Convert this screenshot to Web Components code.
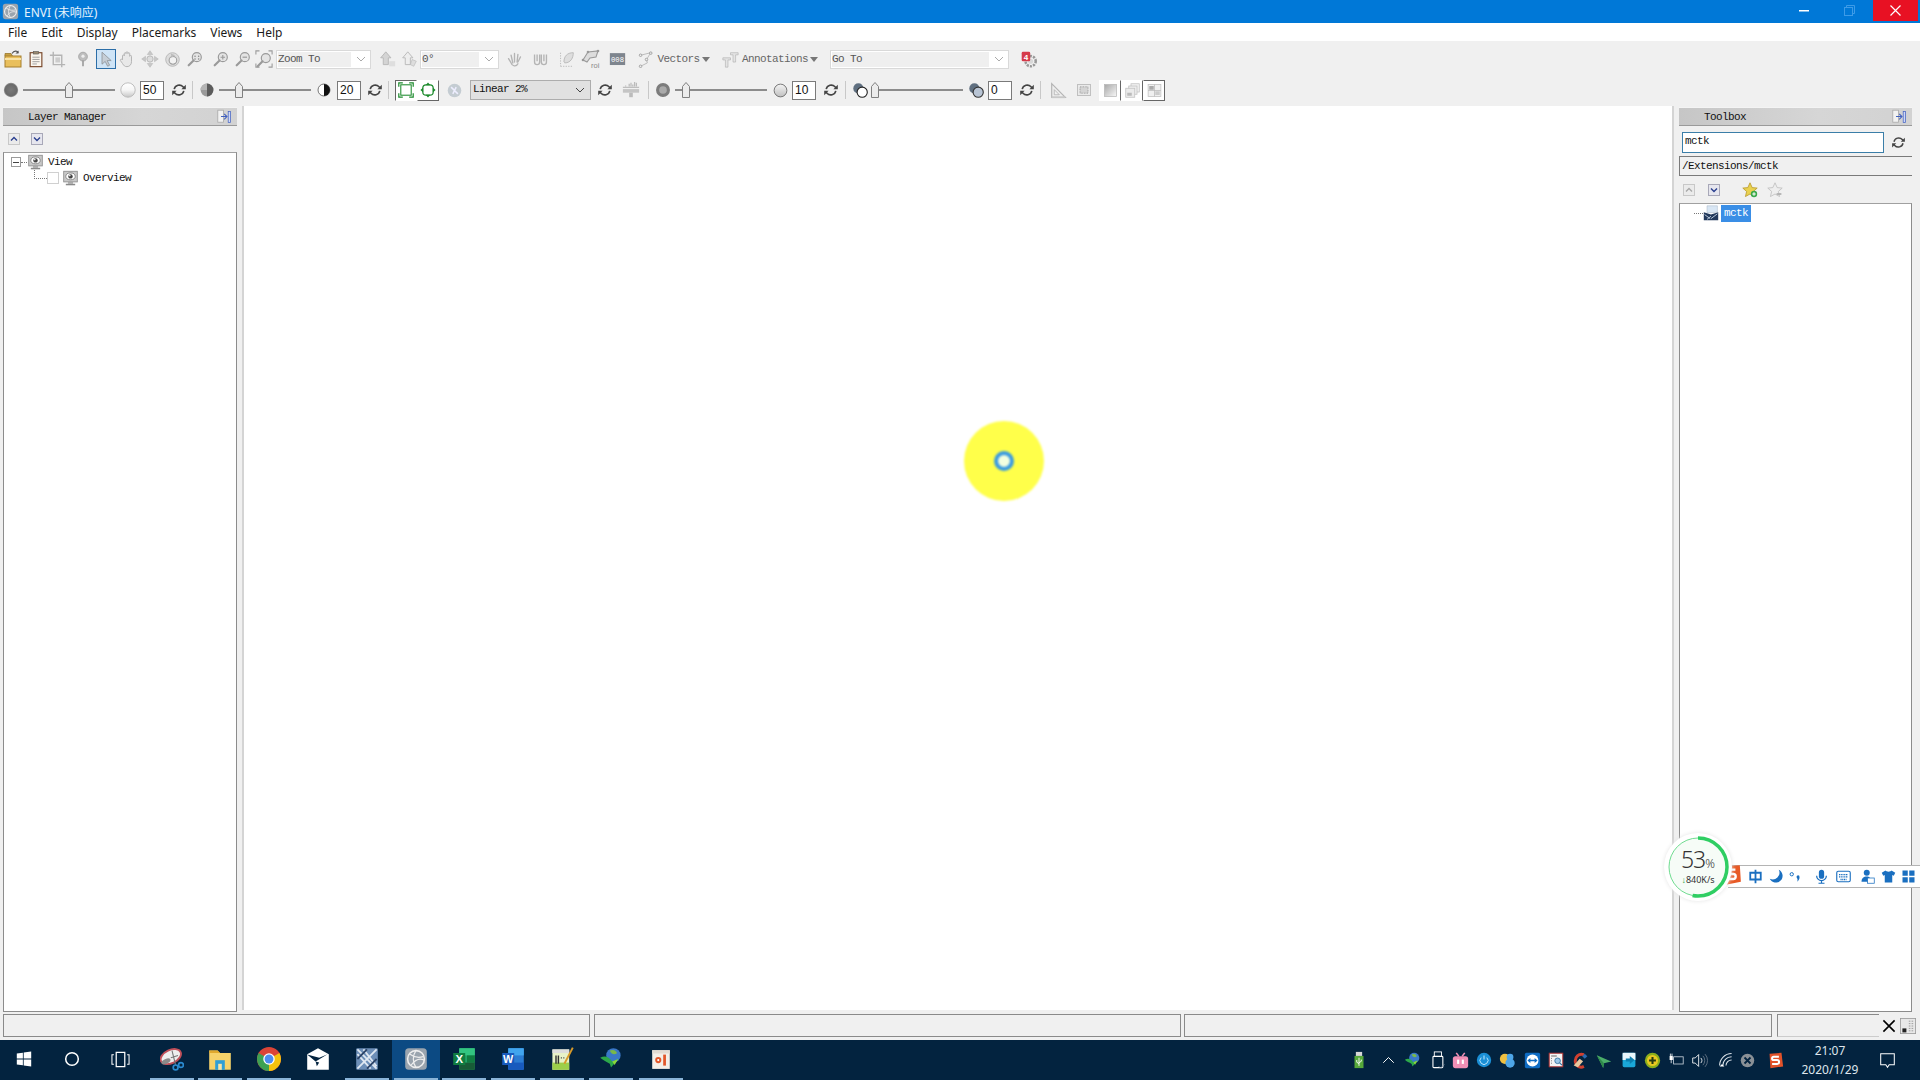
<!DOCTYPE html>
<html lang="zh"><head><meta charset="utf-8"><title>ENVI</title>
<style>
html,body{margin:0;padding:0;width:1920px;height:1080px;overflow:hidden;background:#f0f0f0}
</style></head>
<body>
<env-app></env-app>
<script>
const MONO="font-family:'Liberation Mono',monospace;font-size:11px;letter-spacing:-.6px;";
const G='#b4b4b4', GD='#9a9a9a';
const mag=(extra='')=>`<circle cx="12" cy="8" r="5" fill="#e4e4e4" stroke="${GD}" stroke-width="1.3"/><path d="M8.4 11.6 3 17" stroke="${GD}" stroke-width="2.4" stroke-linecap="round"/>${extra}`;
const refresh=(c='#444')=>`<path d="M4 9a6.4 6.4 0 0 1 11-3l1.500 1.600" fill="none" stroke="${c}" stroke-width="2"/><path d="M18.500 3.500v5.500h-5.500z" fill="${c}"/><path d="M16 11a6.400 6.400 0 0 1-11 3l-1.500-1.600" fill="none" stroke="${c}" stroke-width="2"/><path d="M1.500 16.500v-5.500h5.500z" fill="${c}"/>`;
const monitor=`<rect x="2" y="1.500" width="16" height="12.500" fill="#c8c8c8" stroke="#8c8c8c"/><ellipse cx="10" cy="7.500" rx="5.500" ry="4" fill="#fff" stroke="#666" stroke-width=".8"/><circle cx="10" cy="7.500" r="2.600" fill="#444"/><circle cx="9.200" cy="6.600" r=".9" fill="#fff"/><rect x="7" y="14" width="6" height="2.200" fill="#aaa"/><rect x="4.500" y="16.200" width="11" height="1.800" fill="#8a8a8a"/>`;
const dock=`<rect x="1" y="1.500" width="7" height="15" fill="#f2f2f2" stroke="#a8a8a8"/><path d="M5 9.500h7M9 6l3.500 3.500L9 13" fill="none" stroke="#4060c0" stroke-width="1.300"/><rect x="14" y="3" width="3" height="14" fill="#cfd8f8" stroke="#4060c0" stroke-width=".9"/>`;
const ICONS={
folder:`<path d="M2 7V4.500h6l1.500 2.500" fill="#c8a040" stroke="#98762c" stroke-width=".8"/><path d="M9 4.500C11 1.500 14 1.500 15.500 3.500" fill="none" stroke="#555" stroke-width="1.200"/><path d="M15.500 1.500v3h-3z" fill="#555"/><rect x="2" y="7" width="16" height="11" fill="#e9bf5c" stroke="#a57f2e"/><path d="M2 10h16" stroke="#f8e2a5" stroke-width="2"/>`,
clip:`<rect x="3.500" y="3" width="13" height="15.500" fill="#fbf6ee" stroke="#7a4a2d" stroke-width="1.300"/><rect x="7" y="1.500" width="6" height="3" fill="#9a8a70" stroke="#555" stroke-width=".6"/><path d="M6 8h8M6 10.500h8M6 13h8M6 15.500h5" stroke="#999" stroke-width="1"/>`,
crop:`<path d="M5 1v15h14M1 5h14v14" fill="none" stroke="${G}" stroke-width="1.600"/><rect x="7.500" y="7.500" width="5.500" height="6" fill="#ccc"/>`,
pin:`<circle cx="10" cy="7" r="5.500" fill="#bdbdbd" stroke="#a0a0a0"/><circle cx="10" cy="6.500" r="2" fill="#eee"/><path d="M10 12v7" stroke="${GD}" stroke-width="2"/>`,
arrow:`<path d="M5 1.500v15l4-3.500 3 6 2.500-1.200-3-5.800h5z" fill="#c6ced6" stroke="#8c9096" stroke-width="1"/>`,
hand:`<path d="M5 11V6.500a1 1 0 0 1 2 0V4a1 1 0 0 1 2 0V3a1 1 0 0 1 2 0v1a1 1 0 0 1 2 0v3a1 1 0 0 1 2 0v6c0 3-2 5.500-5 5.500-2.500 0-3.500-1-5-3.500L2.500 11.500a1.200 1.200 0 0 1 2-1z" fill="#e8e8e8" stroke="${G}" stroke-width="1.100"/>`,
move:`<circle cx="10" cy="10" r="3.500" fill="#ddd" stroke="${G}"/><path d="M10 .8 13 5H7zM10 19.200 13 15H7zM.8 10 5 7v6zM19.200 10 15 7v6z" fill="#c8c8c8" stroke="${G}" stroke-width=".6"/>`,
rotate:`<circle cx="10" cy="10" r="8" fill="#dcdcdc" stroke="${G}"/><circle cx="10.500" cy="11" r="4.500" fill="#f2f2f2" stroke="${GD}" stroke-width="1.200"/><path d="M8 3l5 2-4 3z" fill="#bbb"/>`,
zoomfix:mag(`<path d="M10 7h.1M14 7h.1M10 10h.1M14 10h.1" stroke="#888" stroke-width="1.600" stroke-linecap="round"/>`),
zoomin:mag(`<path d="M9.500 8h5M12 5.500v5" stroke="#999" stroke-width="1.200"/>`),
zoomout:mag(`<path d="M9.500 8h5" stroke="#999" stroke-width="1.300"/>`),
zoomext:`<path d="M1 5V1h4M15 1h4v4M1 15v4h4M19 15v4h-4" fill="none" stroke="${GD}" stroke-width="1.200"/><g transform="translate(0 1)">${mag()}</g>`,
up1:`<path d="M8 1 14 8h-3v8H5V8H2z" fill="#d4d4d4" stroke="${G}"/><rect x="12" y="12" width="7" height="6" fill="#dedede"/>`,
up2:`<path d="M8 1 14 8h-3v8H5V8H2z" fill="#eee" stroke="${G}"/><path d="M13 10l5 2-3 6-4-2z" fill="#ddd" stroke="${G}" stroke-width=".7"/>`,
glove:`<path d="M6 5l2 9M10 3v10M14 4l-1 9M17 7l-3 6M6 14c1 4 6 5 8 1M3 9l3 5" fill="none" stroke="${G}" stroke-width="1.600" stroke-linecap="round"/>`,
ww:`<path d="M3 4v9a3 3 0 0 0 6 0V4M11 4v9a3 3 0 0 0 6 0V4M6 4v8M14 4v8" fill="none" stroke="${G}" stroke-width="1.600"/>`,
feather:`<path d="M18 2C11 2 7 6 7 13l1 1C15 14 18 8 18 2z" fill="#dedede" stroke="${G}"/><path d="M3 18h15" stroke="${G}" stroke-dasharray="1.500 1.500"/><path d="M3 2v16" stroke="${G}" stroke-dasharray="1.500 1.500"/>`,
roi:`<path d="M2 11 7 3l10-1-2 6-6 1-3 4z" fill="#ddd" stroke="${GD}" stroke-width="1.100"/><circle cx="7" cy="3" r="1.300" fill="#999"/><circle cx="17" cy="2" r="1.300" fill="#999"/><circle cx="2" cy="11" r="1.300" fill="#999"/><text x="10" y="19" font-family="Liberation Sans" font-size="7.500" fill="#888">roi</text>`,
n008:`<rect x="1" y="2.500" width="18" height="14" fill="#7e858e"/><text x="10" y="13" text-anchor="middle" font-family="Liberation Mono" font-size="8.500" fill="#fff">008</text>`,
vect:`<path d="M3 5l12-3-5 8 1 4-8 4" fill="none" stroke="${G}"/><circle cx="3" cy="5" r="1.500" fill="#eee" stroke="${GD}"/><circle cx="15" cy="2.500" r="1.500" fill="#eee" stroke="${GD}"/><circle cx="10" cy="10" r="1.500" fill="#eee" stroke="${GD}"/><circle cx="3" cy="18" r="1.500" fill="#eee" stroke="${GD}"/>`,
annot:`<path d="M10 2h9v2.500h-3V13h-3V4.500h-3zM1 8h9v2.500H7V19H4v-8.500H1z" fill="#e4e4e4" stroke="${G}" stroke-width=".8"/>`,
badge:`<circle cx="12.500" cy="12" r="6" fill="none" stroke="#999" stroke-width="3" stroke-dasharray="2.500 1.300"/><circle cx="12.500" cy="12" r="3" fill="#d8d8d8"/><rect x="2" y="1" width="10" height="11" rx="1.500" fill="#d63a4a"/><text x="7" y="10" text-anchor="middle" font-family="Liberation Sans" font-weight="bold" font-size="9.500" fill="#fff">4</text>`,
darkc:`<defs><radialGradient id="a"><stop offset="0" stop-color="#7a7a7a"/><stop offset=".8" stop-color="#6a6a6a"/><stop offset="1" stop-color="#9a9a9a"/></radialGradient></defs><circle cx="10" cy="10" r="8" fill="url(#a)"/>`,
lightc:`<defs><linearGradient id="b" x1="0" y1="0" x2="0" y2="1"><stop offset="0" stop-color="#fff"/><stop offset=".5" stop-color="#f6f6f6"/><stop offset="1" stop-color="#c6c6c6"/></linearGradient></defs><circle cx="10" cy="10" r="8" fill="url(#b)" stroke="#b8b8b8"/>`,
halfg:`<circle cx="10" cy="10" r="8" fill="#9a9a9a"/><path d="M10 2a8 8 0 0 1 0 16z" fill="#5c5c5c"/><path d="M2 10h8V2a8 8 0 0 0-8 8" fill="#b4b4b4"/>`,
halfb:`<circle cx="10" cy="10" r="7.500" fill="#fff" stroke="#555"/><path d="M10 2.500a7.500 7.500 0 0 1 0 15z" fill="#111"/>`,
ringg:`<circle cx="10" cy="10" r="6" fill="#aaa" stroke="#7c7c7c" stroke-width="3.500"/>`,
ringl:`<defs><linearGradient id="c" x1="0" y1="0" x2="0" y2="1"><stop offset="0" stop-color="#f4f4f4"/><stop offset="1" stop-color="#c0c0c0"/></linearGradient></defs><circle cx="10" cy="10" r="7.500" fill="url(#c)" stroke="#666"/>`,
over1:`<circle cx="7.500" cy="7.500" r="6" fill="#5f6f80"/><circle cx="12" cy="12" r="6" fill="#fff" stroke="#222" stroke-width="1.300"/>`,
over2:`<circle cx="7.500" cy="7.500" r="6" fill="#5f6f80"/><circle cx="12" cy="12" r="6" fill="#b8c4d4" stroke="#333" stroke-width="1.300"/>`,
fit1:`<rect x="3.500" y="3.500" width="13" height="13" fill="none" stroke="#1c8a2c" stroke-width="1.300"/><path d="M1 6V1h5M14 1h5v5M1 14v5h5M14 19h5v-5" fill="none" stroke="#1c8a2c" stroke-width="1.500"/>`,
fit2:`<rect x="3.500" y="3.500" width="13" height="13" rx="4" fill="none" stroke="#1c8a2c" stroke-width="1.500"/><path d="M10 .5l3 3.500H7zM10 19.500l3-3.500H7zM.5 10 4 7v6zM19.500 10 16 7v6z" fill="#1c8a2c"/>`,
swirl:`<circle cx="10" cy="10" r="8" fill="#c4ccd2"/><path d="M6 6l4 4-2 4M14 14l-4-4 2-4" fill="none" stroke="#eef" stroke-width="1.800"/>`,
hist:`<path d="M8 6V3M10 6V2M12 6V4M14 6V1M16 6V2M4 6V5" stroke="#bbb" stroke-width="1.400"/><path d="M1 7h18" stroke="#aaa"/><rect x="1" y="9" width="18" height="4" fill="#c4c4c4"/><rect x="8" y="13" width="4" height="5" fill="#bbb"/>`,
triangle:`<path d="M2 2v16h16z" fill="#eee" stroke="${G}" stroke-width="1.400"/><path d="M5 9v6h6z" fill="#f0f0f0" stroke="${G}"/><path d="M2 18h16" stroke="#c8c8c8" stroke-width="2"/>`,
dotrect:`<rect x="2" y="3" width="16" height="14" fill="#eaeaea" stroke="${G}"/><rect x="5" y="6" width="10" height="8" fill="#d4d4d4" stroke="#888" stroke-dasharray="1 1"/>`,
grad:`<defs><linearGradient id="d" x1="0" y1="0" x2="1" y2="1"><stop offset="0" stop-color="#a8a8a8"/><stop offset="1" stop-color="#f8f8f8"/></linearGradient></defs><rect x="2" y="2" width="16" height="16" fill="url(#d)" stroke="#b8b8b8"/>`,
layers:`<rect x="8" y="1" width="11" height="11" fill="#f2f2f2" stroke="#c0c0c0"/><rect x="5" y="4" width="11" height="11" fill="#eee" stroke="#c0c0c0"/><rect x="1" y="7" width="12" height="12" fill="#ebebeb" stroke="#c0c0c0"/><rect x="3" y="13" width="6" height="4" fill="#bbb"/>`,
split:`<rect x="1.500" y="2" width="17" height="16" fill="#f0f0f0" stroke="#c0c0c0"/><path d="M10 2v16M1.500 10h17" stroke="#bbb"/><rect x="3" y="4" width="6" height="5" fill="#aaa"/><rect x="11" y="11" width="6" height="5" fill="#ccc"/>`,
refresh:refresh(),
view:monitor,
dock,
up:`<rect x=".5" y=".5" width="11" height="11" fill="#ebebeb" stroke="#c8c8c8"/><path d="M3 7.500l3-3 3 3" fill="none" stroke="#2a3f8f" stroke-width="1.400"/>`,
upg:`<rect x=".5" y=".5" width="11" height="11" fill="#ebebeb" stroke="#c8c8c8"/><path d="M3 7.500l3-3 3 3" fill="none" stroke="#a8a8a8" stroke-width="1.400"/>`,
down:`<rect x=".5" y=".5" width="11" height="11" fill="#e6e6ee" stroke="#a8a8b8"/><path d="M3 4.500l3 3 3-3" fill="none" stroke="#2a3f8f" stroke-width="1.400"/>`,
starAdd:`<path d="M10 1l2.700 6 6.300.6-4.800 4.200 1.500 6.400L10 15l-5.700 3.200 1.500-6.400L1 7.600 7.300 7z" fill="#e9d14f" stroke="#b8982c"/><circle cx="15" cy="15" r="4" fill="#3aa84a"/><path d="M12.800 15h4.400M15 12.800v4.400" stroke="#fff" stroke-width="1.300"/>`,
starDel:`<path d="M10 1l2.700 6 6.300.6-4.800 4.200 1.500 6.400L10 15l-5.700 3.200 1.500-6.400L1 7.600 7.300 7z" fill="#eee" stroke="#bcbcbc"/><path d="M12 15h6" stroke="#aaa" stroke-width="2"/>`,
mctk:`<path d="M5 1h13v8L5 10z" fill="#d8e6f4" stroke="#a4b4c4" stroke-width=".6"/><path d="M1 9l9 3 9-3v10H1z" fill="#23395c"/><path d="M2 12l7 5M18 11l-8 6M5 18l5-4" stroke="#c8d8e8" stroke-width="1.100"/>`,
win:`<path d="M1 3.200 8.600 2.100v7.400H1zM9.600 2 19 .6v8.900H9.600zM1 10.500h7.600v7.400L1 16.800zM9.600 10.500H19v8.900L9.600 18z" fill="#fff"/>`,
cortana:`<circle cx="10" cy="10" r="7" fill="none" stroke="#fff" stroke-width="1.700"/>`,
tview:`<rect x="5.500" y="2.500" width="9" height="15" fill="none" stroke="#fff" stroke-width="1.300"/><path d="M3 5H1v10h2M17 5h2v10h-2" fill="none" stroke="#fff" stroke-width="1.100"/>`,
snip:`<ellipse cx="9" cy="8" rx="9" ry="5.500" transform="rotate(-25 9 8)" fill="#eee" stroke="#c0505a" stroke-width="1.600"/><ellipse cx="5" cy="12" rx="4" ry="2" transform="rotate(-25 5 12)" fill="#8a8a8a"/><path d="M10 3l3 12M9 9l6-2" stroke="#777" stroke-width=".9"/><circle cx="13" cy="17" r="2" fill="none" stroke="#2a8ad0" stroke-width="1.400"/><circle cx="17.500" cy="15" r="2" fill="none" stroke="#2a8ad0" stroke-width="1.400"/>`,
explorer:`<path d="M1 3h7l2 2h9v14H1z" fill="#f6d26a"/><path d="M1 3h7l2 2H1z" fill="#e0a92e"/><rect x="6" y="11" width="8" height="8" fill="#2f9fd6"/><rect x="8.500" y="14" width="3" height="5" fill="#f6e4a8"/>`,
chrome:`<circle cx="10" cy="10" r="10" fill="#db4437"/><path d="M10 10 18.660 5A10 10 0 0 1 10 20z" fill="#f4c20d"/><path d="M10 10 10 20A10 10 0 0 1 1.340 5z" fill="#3da153"/><circle cx="10" cy="10" r="4.800" fill="#fff"/><circle cx="10" cy="10" r="3.700" fill="#4d8df0"/>`,
mail:`<path d="M1 6 10 1l9 5v13H1z" fill="#fff"/><path d="M1 6.200 8 12l10-6-7 3z" fill="#03233f"/><path d="M8 12l1 4 2-3z" fill="#03233f"/>`,
xapp:`<rect x="1" y="1" width="18" height="18" rx="1" fill="#6d8fb8"/><path d="M2 2l16 16M18 2 2 18M7 2l11 14M13 18 2 6" stroke="#dfe8f2" stroke-width="1.500"/><path d="M2 10l8-8M10 18l8-8" stroke="#2c4468" stroke-width="1.500"/>`,
envi:`<rect x="1" y="1" width="18" height="18" rx="3" fill="#9aa4ae"/><circle cx="10" cy="10" r="7" fill="none" stroke="#eee" stroke-width="1.300"/><path d="M5 6c4 3 8 3 11 2M10 3c-3 4-3 10 0 14M6 15c3-4 7-6 11-4" fill="none" stroke="#eee" stroke-width="1"/>`,
excel:`<rect x="6" y="1" width="13" height="18" rx="1" fill="#21a366"/><rect x="6" y="1" width="13" height="6" fill="#33c481"/><rect x="12.500" y="7" width="6.500" height="6" fill="#107c41"/><rect x="6" y="13" width="13" height="6" fill="#185c37"/><rect x="1" y="5" width="10" height="10" fill="#107c41"/><text x="6" y="13.200" text-anchor="middle" font-family="Liberation Sans" font-weight="bold" font-size="9.500" fill="#fff">X</text>`,
word:`<rect x="6" y="1" width="13" height="18" rx="1" fill="#2b7cd3"/><rect x="6" y="1" width="13" height="6" fill="#41a5ee"/><rect x="6" y="13" width="13" height="6" fill="#185abd"/><rect x="1" y="5" width="10" height="10" fill="#185abd"/><text x="6" y="13.200" text-anchor="middle" font-family="Liberation Sans" font-weight="bold" font-size="9" fill="#fff">W</text>`,
note:`<rect x="2" y="2" width="14" height="17" fill="#e8f2c8"/><rect x="2" y="13" width="14" height="6" fill="#9ccf4a"/><rect x="2" y="2" width="14" height="3" fill="#ddd"/><path d="M5 7v7M7 7v7" stroke="#333" stroke-width="1.200"/><path d="M9 9h4" stroke="#555" stroke-dasharray="1 1"/><path d="M19 .5 12 14" stroke="#d89a2a" stroke-width="1.600"/>`,
idm:`<circle cx="12" cy="7" r="6" fill="#3a78c8"/><path d="M9 3c2-1 5-1 6 2-2 2-5 1-6-2z" fill="#7ab84a"/><path d="M1 9c4-2 7-1 10 3l5-2-6 7-1-3C6 12 3 11 1 9z" fill="#2ca84a"/><path d="M11 12l5-2-3 5z" fill="#8ad83a"/>`,
ppt:`<rect x="2" y="2" width="16" height="17" fill="#f4efe8"/><path d="M2 2h16v3H2z" fill="#e2dbd2"/><circle cx="7.500" cy="11" r="2.800" fill="#e2572a"/><circle cx="7.500" cy="11" r="1" fill="#fff"/><rect x="12" y="6" width="2.500" height="10" fill="#e2572a"/>`,
usbg:`<rect x="6.500" y="1" width="7" height="4.500" fill="#d8d8d8"/><rect x="5" y="5.500" width="10" height="13.500" fill="#56a83a"/><path d="M10 7.500v9M7.500 10v2.500l2.500 1.500M12.500 9.500v2l-2.500 1.500" stroke="#fff" fill="none"/>`,
chev:`<path d="M3 13l7-7 7 7" fill="none" stroke="#fff" stroke-width="1.300"/>`,
usbw:`<rect x="7" y="1" width="8" height="5" fill="none" stroke="#fff"/><rect x="5.500" y="6" width="11" height="12.500" rx="1" fill="#03233f" stroke="#fff" stroke-width="1.200"/><path d="M12 17l2 2 4-4" fill="none" stroke="#8a99a8"/>`,
bili:`<rect x="1" y="5" width="18" height="14" rx="3" fill="#f190b6"/><path d="M5 1l3 4M15 1l-3 4" stroke="#f190b6" stroke-width="1.800"/><rect x="6" y="9" width="2.500" height="5" fill="#fff"/><rect x="11.500" y="9" width="2.500" height="5" fill="#fff"/>`,
power:`<circle cx="10" cy="10" r="9" fill="#1a8fd6"/><path d="M6.500 7a5 5 0 1 0 7 0" fill="none" stroke="#bfe4fa" stroke-width="1.200"/><path d="M10 4.500v5" stroke="#bfe4fa" stroke-width="1.300"/>`,
cloud:`<circle cx="7" cy="8" r="6" fill="#f0c040"/><circle cx="13" cy="6" r="4" fill="#4ea6e8"/><circle cx="13" cy="13" r="5.500" fill="#4ea6e8"/>`,
tv:`<rect x="1" y="1" width="18" height="18" rx="2" fill="#0e6cc4"/><circle cx="10" cy="10" r="7" fill="#fff"/><path d="M4 10l3.500-3v2h5V7L16 10l-3.500 3v-2h-5v2z" fill="#0e6cc4"/>`,
screen:`<rect x="1.500" y="1.500" width="17" height="17" fill="#f4f4f4" stroke="#b03030" stroke-width="1.200"/><path d="M4 5h7M4 8h1M4 11h1M4 14h1" stroke="#444"/><circle cx="12" cy="11" r="3.500" fill="#9cc8e8" stroke="#2a6a9a"/><path d="M14.500 13.500l3 3" stroke="#2a6a9a" stroke-width="1.300"/>`,
cc:`<path d="M14 3C8 1 3 6 4 12c1 5 6 7 10 5" fill="none" stroke="#d04030" stroke-width="3.500"/><path d="M9 8 2 16l5 2 6-7z" fill="#e8c8a0"/><path d="M12 5l3-3 3 3-3 3z" fill="#2a6ab0"/>`,
paper:`<path d="M1 4l18 8-9 2-1 6z" fill="#4cae6a"/><path d="M1 4l9 10-1 6z" fill="#2f8a4a"/>`,
bluear:`<rect x="2" y="1" width="16" height="18" rx="2" fill="#1aa7d8"/><path d="M2 1h16v9H2z" fill="#e8f6fc"/><path d="M6 8h5V5l6 5-6 5v-3H6z" fill="#0b7fb0"/>`,
plus:`<circle cx="10" cy="10" r="9" fill="#8aae1c"/><circle cx="10" cy="10" r="6.500" fill="#e8c820"/><path d="M6 10h8M10 6v8" stroke="#263a12" stroke-width="2.400"/>`,
plug:`<rect x="7" y="6" width="12" height="9" fill="none" stroke="#cfd8e0"/><rect x="2" y="5" width="4" height="5" fill="#fff"/><path d="M3 2v3M5 2v3M4 10v4" stroke="#fff"/>`,
spk:`<path d="M2 7h3l4-4v14l-4-4H2z" fill="none" stroke="#fff"/><path d="M11.500 7a4 4 0 0 1 0 6" fill="none" stroke="#fff"/><path d="M14 4.500a8 8 0 0 1 0 11M16.500 2.500a11 11 0 0 1 0 15" fill="none" stroke="#6a7a8a"/>`,
wifi:`<path d="M2 17a15 15 0 0 1 15-15M6 17a11 11 0 0 1 11-11M10 17a7 7 0 0 1 7-7" fill="none" stroke="#dfe6ec" stroke-width="1.300"/><path d="M2 18l3-3 3 3z" fill="#fff"/>`,
grayx:`<circle cx="10" cy="10" r="9" fill="#8a9096"/><path d="M6 6l8 8M14 6l-8 8" stroke="#03233f" stroke-width="2.400"/>`,
sogou:`<path d="M3 2 17 1l2 16-15 2z" fill="#e2522a"/><path d="M14 5.500H8a2 2 0 0 0 0 4h4a2 2 0 0 1 0 4.500H6" fill="none" stroke="#fff" stroke-width="2.400"/>`,
msg:`<path d="M2 2h16v13h-6l-2 3-2-3H2z" fill="none" stroke="#fff" stroke-width="1.200"/>`,
xbig:`<path d="M3 3l14 14M17 3 3 17" stroke="#000" stroke-width="2"/>`,
grip:`<rect x=".5" y=".5" width="19" height="19" fill="#e8e8e8" stroke="#999"/><rect x="3" y="13" width="5" height="5" fill="#222"/><path d="M11 4h6M11 7h6M11 10h6M11 13h6M11 16h6" stroke="#8a8a8a" stroke-dasharray="2 1.500"/>`,
imeZh:`<path d="M3 5h14v9H3zM10 1v18" fill="none" stroke="#1a6fc0" stroke-width="2.400"/>`,
imeMoon:`<path d="M13 1A9 9 0 1 1 1 13 9 9 0 0 0 13 1z" fill="#1a6fc0"/>`,
imeDot:`<circle cx="5" cy="7" r="2.200" fill="none" stroke="#1a6fc0" stroke-width="1.300"/><path d="M15 9c1 3 0 6-3 8 1-2 1-3 0-5a2 2 0 0 1 3-3z" fill="#1a6fc0"/>`,
imeMic:`<rect x="6.500" y="1" width="7" height="12" rx="3.500" fill="#1a6fc0"/><path d="M3.500 9a6.500 6.500 0 0 0 13 0M10 16v3M6 19h8" fill="none" stroke="#1a6fc0" stroke-width="1.600"/>`,
imeKey:`<rect x="1" y="3" width="18" height="14" rx="2" fill="none" stroke="#1a6fc0" stroke-width="1.500"/><path d="M4 7.500h12M4 10.500h12M6 14h8" stroke="#1a6fc0" stroke-width="1.700" stroke-dasharray="1.500 .8"/>`,
imeUser:`<circle cx="9" cy="5" r="4" fill="#1a6fc0"/><path d="M2 17c0-5 3-7 7-7s4 2 4 2v5z" fill="#1a6fc0"/><rect x="10" y="12" width="9" height="7" fill="#fff" stroke="#1a6fc0"/>`,
imeShirt:`<path d="M6 2 1 5l2 4 2-1v10h10V8l2 1 2-4-5-3c-1 2-7 2-8 0z" fill="#1a6fc0"/>`,
imeGrid:`<path d="M2 2h7v7H2zM11 2h7v7h-7zM2 11h7v7H2zM11 11h7v7h-7z" fill="#1a6fc0"/>`,
imeS:`<path d="M2 3 18 2l1 15-15 3z" fill="#e85a26"/><path d="M14 6H8a2 2 0 0 0 0 4h4a2 2 0 0 1 0 4.500H6" fill="none" stroke="#fff" stroke-width="2.200"/>`
};
const VB={up:12,upg:12,down:12};
class EnvIcon extends HTMLElement{
  connectedCallback(){
    const s=this.getAttribute('size')||16, n=this.getAttribute('name'), vb=VB[n]||20;
    const sr=this.shadowRoot||this.attachShadow({mode:'open'});
    sr.innerHTML=`<style>:host{display:inline-flex;flex:none;width:${s}px;height:${s}px}svg{display:block;width:100%;height:100%}</style><svg viewBox="0 0 ${vb} ${vb}" aria-hidden="true">${ICONS[n]||''}</svg>`;
  }
}
customElements.define('env-icon',EnvIcon);
const ic=(n,s=16,st='')=>`<env-icon name="${n}" size="${s}" style="${st}"></env-icon>`;

class EnvTitlebar extends HTMLElement{constructor(){super();this.attachShadow({mode:'open'}).innerHTML=`<style>
:host{display:flex;align-items:center;height:23px;background:#0078d7;color:#fff;font:12px "Noto Sans","Noto Sans CJK SC",sans-serif;flex:none}
.ic{margin:0 5px 0 2px;display:flex}.t{flex:1;color:#e8f3fc}
.w{display:flex;align-items:center;justify-content:center;height:21px;align-self:flex-start}
.min{width:20px;margin-right:25px}.max{width:20px;margin-right:14px}.x{width:45px;background:#e81123;margin-right:2px}
</style><span class="ic">${ic('envi',17)}</span><span class="t">ENVI (未响应)</span>
<span class="w min"><svg width="10" height="2"><rect width="10" height="1.500" fill="#fff"/></svg></span>
<span class="w max"><svg width="11" height="11" fill="none" stroke="#3d9be8"><rect x=".5" y="2.500" width="8" height="8"/><path d="M2.500 2.500v-2h8v8h-2"/></svg></span>
<span class="w x"><svg width="11" height="11" stroke="#fff" stroke-width="1.200"><path d="M.5.5l10 10M10.500.5l-10 10"/></svg></span>`}}
customElements.define('env-titlebar',EnvTitlebar);

class EnvMenubar extends HTMLElement{constructor(){super();this.attachShadow({mode:'open'}).innerHTML=`<style>
:host{display:flex;align-items:center;height:18px;background:#fff;color:#1a1a1a;font:12px "Noto Sans",sans-serif;padding-left:8px;gap:14px;flex:none}
span{display:block}</style>${['File','Edit','Display','Placemarks','Views','Help'].map(m=>`<span>${m}</span>`).join('')}`}}
customElements.define('env-menubar',EnvMenubar);

class EnvCombo extends HTMLElement{connectedCallback(){
 const on=this.hasAttribute('active');
 this.attachShadow({mode:'open'}).innerHTML=`<style>
 :host{display:flex;box-sizing:border-box;height:${on?20:19}px;align-items:stretch;border:1px solid ${on?'#adadad':'#d9d9d9'};background:${on?'#e1e1e1':'#fff'};color:${on?'#111':'#555'};${MONO}}
 .t{flex:1;background:${on?'transparent':'#efefef'};margin:1px 0 1px 1px;line-height:15px;white-space:pre;padding-left:${on?1:0}px}
 .a{width:${on?20:19}px;display:flex;align-items:center;justify-content:center}</style>
 <span class="t">${this.getAttribute('text')}</span><span class="a"><svg width="10" height="6" fill="none" stroke="${on?'#444':'#aaa'}"><path d="M1 1l4 4 4-4"/></svg></span>`}}
customElements.define('env-combo',EnvCombo);

class EnvSlider extends HTMLElement{connectedCallback(){
 const p=this.getAttribute('thumb');
 this.attachShadow({mode:'open'}).innerHTML=`<style>
 :host{display:block;position:relative;height:20px}
 .track{position:absolute;left:0;right:0;top:9px;height:2px;background:#8c8c8c}
 svg{position:absolute;top:2px;left:${p}px}</style><div class="track"></div>
 <svg width="8" height="16"><path d="M.5 4.500 4 .5l3.500 4v11H.5z" fill="#ececec" stroke="#808080"/></svg>`}}
customElements.define('env-slider',EnvSlider);

class EnvNum extends HTMLElement{connectedCallback(){
 this.attachShadow({mode:'open'}).innerHTML=`<style>:host{display:block;box-sizing:border-box;height:19px;background:#fff;border:1px solid #7a7a7a;font:12px/17px "Liberation Sans",sans-serif;color:#111;padding-left:2px}</style>${this.getAttribute('value')}`}}
customElements.define('env-num',EnvNum);

class EnvToolbtn extends HTMLElement{connectedCallback(){
 const e=this.getAttribute('edges')||'';
 const c=k=>e.includes(k)?'#666':'#fff';
 this.attachShadow({mode:'open'}).innerHTML=`<style>:host{display:flex;box-sizing:border-box;height:21px;width:22px;align-items:center;justify-content:center;background:#fff;border:1px solid;border-color:${c('t')} ${c('r')} ${c('b')} ${c('l')}}</style><slot></slot>`}}
customElements.define('env-toolbtn',EnvToolbtn);

/* A toolbar row: its items come from [start x, width, markup] and flow by margins */
class EnvToolbar extends HTMLElement{constructor(){super();this.attachShadow({mode:'open'}).innerHTML=`<style>:host{display:flex;align-items:center;height:30px;flex:none}::slotted(*){flex:none}</style><slot></slot>`}
 set items(list){let r=0;this.innerHTML=list.map(([x,w,h])=>{const s=`<div style="margin-left:${x-r}px;width:${w}px;display:flex;justify-content:center;align-items:center">${h}</div>`;r=x+w;return s}).join('')}}
customElements.define('env-toolbar',EnvToolbar);

const sep=x=>[x,1,`<div style="width:1px;height:18px;background:#c8c8c8"></div>`];
const i=(c,n,s=16)=>[c-s/2,s,ic(n,s)];
const txt=t=>`<span style="${MONO}color:#666;white-space:pre">${t}</span>`;
const caret=`<svg width="8" height="5"><path d="M0 0h8L4 5z" fill="#777"/></svg>`;
const row1=[i(13,'folder',20),i(36,'clip',18),i(57,'crop',17),i(83,'pin',16),
 [96,20,`<div style="box-sizing:border-box;width:20px;height:20px;background:#cfe4f6;border:1px solid #2c6ea8;display:flex;align-items:center;justify-content:center">${ic('arrow',16)}</div>`],
 i(127,'hand',18),i(150,'move',18),i(172,'rotate',17),i(195,'zoomfix',18),i(221,'zoomin',18),i(243,'zoomout',18),i(264,'zoomext',18),
 [276,95,`<env-combo text="Zoom To" style="width:95px"></env-combo>`],
 i(387,'up1',17),i(409,'up2',17),[420,79,`<env-combo text="0°" style="width:79px"></env-combo>`],
 i(514,'glove',17),i(540,'ww',17),i(566,'feather',17),i(591,'roi',20),i(617,'n008',17),i(646,'vect',17),
 [657,43,txt('Vectors')],[702,8,caret],i(730,'annot',17),[742,66,txt('Annotations')],[810,8,caret],
 [830,179,`<env-combo text="Go To" style="width:179px"></env-combo>`],i(1028,'badge',17)];
const row2=[i(11,'darkc',18),[23,92,`<env-slider thumb="42" style="width:92px"></env-slider>`],i(128,'lightc',18),
 [140,24,`<env-num value="50" style="width:24px"></env-num>`],i(179,'refresh',16),sep(192),i(207,'halfg',16),
 [219,92,`<env-slider thumb="16" style="width:92px"></env-slider>`],i(324,'halfb',16),[337,24,`<env-num value="20" style="width:24px"></env-num>`],
 i(375,'refresh',16),sep(388),[395,22,`<env-toolbtn edges="lt">${ic('fit1',16)}</env-toolbtn>`],[417,22,`<env-toolbtn edges="rb">${ic('fit2',16)}</env-toolbtn>`],
 i(454,'swirl',17),[470,121,`<env-combo active text="Linear 2%" style="width:121px"></env-combo>`],i(605,'refresh',16),i(631,'hist',18),sep(648),
 i(663,'ringg',18),[675,92,`<env-slider thumb="7" style="width:92px"></env-slider>`],i(780,'ringl',17),[792,24,`<env-num value="10" style="width:24px"></env-num>`],
 i(831,'refresh',16),sep(845),i(860,'over1',17),[871,92,`<env-slider thumb="0" style="width:92px"></env-slider>`],i(976,'over2',17),
 [988,24,`<env-num value="0" style="width:24px"></env-num>`],i(1027,'refresh',16),sep(1040),i(1058,'triangle',17),i(1084,'dotrect',16),
 [1099,22,`<env-toolbtn edges="r">${ic('grad',15)}</env-toolbtn>`],[1121,22,`<env-toolbtn edges="r">${ic('layers',15)}</env-toolbtn>`],[1143,22,`<env-toolbtn edges="trb">${ic('split',15)}</env-toolbtn>`]];

class EnvPanelHead extends HTMLElement{connectedCallback(){
 this.attachShadow({mode:'open'}).innerHTML=`<style>
 :host{display:flex;align-items:center;justify-content:space-between;box-sizing:border-box;height:19px;flex:none;
  background:linear-gradient(90deg,#c6c6c6,#d6d6d6 60%,#d2d2d2);border-bottom:1px solid #9a9a9a;border-top:1px solid #f4f4f4;
  padding-left:${this.getAttribute('pad')}px;padding-right:4px;color:#111;${MONO}}</style>
 <span>${this.getAttribute('title')}</span>${ic('dock',16)}`}}
customElements.define('env-panel-head',EnvPanelHead);

class EnvBox extends HTMLElement{constructor(){super();this.attachShadow({mode:'open'}).innerHTML=`<style>
 :host{display:block;flex:1;background:#fff;box-sizing:border-box;border:1px solid #8c8c8c;border-top-color:#a0a0a0;min-height:0;color:#111;${MONO}}</style><slot></slot>`}}
customElements.define('env-box',EnvBox);

class EnvLeftPanel extends HTMLElement{constructor(){super();this.attachShadow({mode:'open'}).innerHTML=`<style>
 :host{display:flex;flex-direction:column;width:234px;flex:none;margin:1px 0 2px 3px}
 .bar{display:flex;align-items:center;height:26px;gap:11px;padding-left:5px;flex:none}
 .r{display:flex;align-items:center;height:16px}
 .r1{margin-top:1px;padding-left:7px}.r2{padding-left:30px}
 .box{box-sizing:border-box;width:10px;height:10px;border:1px solid #9a9a9a;display:flex;align-items:center;justify-content:center;background:#fff;flex:none}
 .box i{display:block;width:6px;height:1px;background:#444}
 .h{width:6px;border-top:1px dotted #777;flex:none}.v{width:12px;height:8px;border-left:1px dotted #777;border-bottom:1px dotted #777;margin-top:-8px;flex:none}
 .cb{box-sizing:border-box;width:12px;height:12px;border:1px solid #d0d0d0;background:#fff;margin-right:3px;flex:none}
 </style><env-panel-head title="Layer Manager" pad="25"></env-panel-head>
 <div class="bar">${ic('up',12)}${ic('down',12)}</div>
 <env-box><div class="r r1"><span class="box"><i></i></span><span class="h"></span>${ic('view',17)}<span style="margin-left:4px">View</span></div>
 <div class="r r2"><span class="v"></span><span class="cb"></span>${ic('view',17)}<span style="margin-left:4px">Overview</span></div></env-box>`}}
customElements.define('env-left-panel',EnvLeftPanel);

class EnvRightPanel extends HTMLElement{constructor(){super();this.attachShadow({mode:'open'}).innerHTML=`<style>
 :host{display:flex;flex-direction:column;width:233px;flex:none;margin:1px 8px 2px 0;${MONO}color:#111}
 .s{display:flex;align-items:flex-end;height:27px;padding-left:3px;flex:none}
 .in{box-sizing:border-box;width:202px;height:21px;border:1px solid #3b7ea8;background:#fff;padding-left:2px;line-height:17px}
 .path{box-sizing:border-box;height:20px;margin-top:3px;border:1px solid #7a7a7a;border-right:0;line-height:18px;padding-left:2px;flex:none}
 .bar{display:flex;align-items:center;height:27px;flex:none;padding-left:4px}
 .t{display:flex;align-items:center;height:16px;padding:1px 0 0 14px}
 .d{width:9px;border-top:1px dotted #777;flex:none}
 .sel{background:#3a8ee6;color:#fff;padding:0 3px;height:17px;line-height:16px;margin-left:2px}
 </style><env-panel-head title="Toolbox" pad="25"></env-panel-head>
 <div class="s"><span class="in">mctk</span>${ic('refresh',15,'margin:0 0 3px 7px')}</div>
 <div class="path">/Extensions/mctk</div>
 <div class="bar">${ic('upg',12)}${ic('down',12,'margin-left:13px')}${ic('starAdd',16,'margin-left:22px')}${ic('starDel',16,'margin-left:9px')}</div>
 <env-box><div class="t"><span class="d"></span>${ic('mctk',16)}<span class="sel">mctk</span></div></env-box>`}}
customElements.define('env-right-panel',EnvRightPanel);

class EnvCanvas extends HTMLElement{constructor(){super();this.attachShadow({mode:'open'}).innerHTML=`<style>
 :host{display:block;flex:none;width:1428px;margin:0 5px 4px 5px;background:#fff;box-sizing:content-box;border:solid #d4d4d4;border-width:0 2px;position:relative}
 </style><slot></slot>`}}
customElements.define('env-canvas',EnvCanvas);

class EnvCursor extends HTMLElement{constructor(){super();this.attachShadow({mode:'open'}).innerHTML=`<style>
 :host{position:absolute;left:720px;top:315px;width:80px;height:80px;border-radius:50%;background:#ffff4a;filter:blur(1px);display:flex;align-items:center;justify-content:center}
 i{display:block;box-sizing:border-box;width:20px;height:20px;border-radius:50%;border:4px solid #3a9ae0;background:#f4ffe0}</style><i></i>`}}
customElements.define('env-cursor',EnvCursor);

class EnvStatus extends HTMLElement{constructor(){super();this.attachShadow({mode:'open'}).innerHTML=`<style>
 :host{display:flex;height:23px;flex:none;padding-left:3px;margin-bottom:3px}
 b{display:block;box-sizing:border-box;height:23px;border:1px solid #8a8a8a;border-width:1.500px 1px 1px 1px;margin-right:3px;flex:none}
 .end{display:flex;align-items:center}</style>
 <b style="width:587px;margin-right:4px"></b><b style="width:587px"></b><b style="width:588px;margin-right:5px"></b>
 <b style="width:102px;margin-right:2px;border-right:0;border-bottom-color:#ccc"></b>
 <span class="end">${ic('xbig',16,'margin-right:3px')}${ic('grip',16)}</span>`}}
customElements.define('env-status',EnvStatus);

class EnvTaskbar extends HTMLElement{constructor(){super();
 const apps=[['win',24,16],['cortana',72,18],['tview',120,19],['snip',172,24,1],['explorer',220,24,1],['chrome',269,24,1],['mail',318,24],['xapp',367,24,1],['envi',416,24,2],['excel',464,24,1],['word',513,24,1],['note',562,24,1],['idm',611,24,1],['ppt',661,22,1]];
 const tray=[['usbg',1359,18],['chev',1388,15],['idm',1412,17],['usbw',1437,18],['bili',1460,17],['power',1484,16],['cloud',1507,17],['tv',1532,17],['screen',1556,16],['cc',1580,17],['paper',1604,16],['bluear',1629,16],['plus',1652,17],['plug',1676,16],['spk',1699,17],['wifi',1726,16],['grayx',1747,15],['sogou',1775,17]];
 let r=0;
 const a=apps.map(([n,c,s,st])=>{const l=c-24,m=l-r;r=l+48;
  return `<span class="a ${st==2?'act':''} ${st?'run':''}" style="margin-left:${m}px">${ic(n,s)}</span>`}).join('');
 let r2=r;
 const t=tray.map(([n,c,s])=>{const l=c-s/2,m=l-r2;r2=l+s;return ic(n,s,`margin-left:${m}px`)}).join('');
 this.attachShadow({mode:'open'}).innerHTML=`<style>
 :host{display:flex;align-items:center;height:40px;flex:none;background:#03233f;color:#fff}
 .a{display:flex;align-items:center;justify-content:center;width:48px;height:40px;box-sizing:border-box;flex:none;border-bottom:2px solid transparent}
 .run{border-bottom-color:#8ab4d8;background-clip:padding-box;border-image:linear-gradient(90deg,transparent 4px,#8ab4d8 4px,#8ab4d8 44px,transparent 44px) 2}
 .act{background:#0c4a83}
 .clock{width:64px;text-align:center;font:12px/19px "Noto Sans",sans-serif;margin-left:${1798-r2}px;flex:none;color:#dfe6ec}
 </style>${a}${t}<div class="clock"><div>21:07</div><div>2020/1/29</div></div>${ic('msg',17,'margin-left:16.500px')}`}}
customElements.define('env-taskbar',EnvTaskbar);

class EnvIme extends HTMLElement{constructor(){super();this.attachShadow({mode:'open'}).innerHTML=`<style>
 :host{position:absolute;left:1664px;top:833px;width:256px;height:68px;display:block}
 .bar{position:absolute;left:64px;right:0;top:32px;height:23px;box-sizing:border-box;background:#fff;border:solid #b4b4b4;border-width:1px 0;display:flex;align-items:center}
 .bar env-icon{position:absolute;top:3px}
 .s{position:absolute;left:56px;top:30px}
 .g{position:absolute;left:0;top:0;width:68px;height:68px;border-radius:50%;background:#fff;box-shadow:0 0 4px #e4e4e4}
 svg{position:absolute;left:0;top:0}
 .n{position:absolute;left:0;width:68px;text-align:center;font-family:"Noto Sans",sans-serif;color:#333}
 .pc{top:12px;font-size:23px;line-height:28px;font-weight:300;letter-spacing:-1px}.pc small{font-size:12px;letter-spacing:0}
 .sp{top:41px;font-size:9px;line-height:12px}.sp em{font-style:normal;color:#1fa64a;font-weight:700}
 </style><div class="bar">
 ${[['imeZh',1755],['imeMoon',1776],['imeDot',1795],['imeMic',1821],['imeKey',1843],['imeUser',1867],['imeShirt',1888],['imeGrid',1908]].map(([n,c])=>ic(n,15,`left:${c-1728-7.5}px`)).join('')}
 </div><env-icon class="s" name="imeS" size="22"></env-icon><div class="g"></div>
 <svg width="68" height="68"><circle cx="34" cy="34" r="29" fill="#f6fcf7" stroke="#6fdc90" stroke-width="1"/><circle cx="34" cy="34" r="29" fill="none" stroke="#2fce63" stroke-width="3.500" pathLength="100" stroke-dasharray="53 100" transform="rotate(-90 34 34)"/></svg>
 <div class="n pc">53<small>%</small></div><div class="n sp"><em>↓</em>840K/s</div>`}}
customElements.define('env-ime',EnvIme);

class EnvApp extends HTMLElement{constructor(){super();this.attachShadow({mode:'open'}).innerHTML=`<style>
 :host{display:flex;flex-direction:column;width:1920px;height:1080px;position:relative;background:#f0f0f0;overflow:hidden}
 .tools{padding:3px 0 1px;flex:none}
 #b{margin-top:1px}
 .main{display:flex;flex:1;min-height:0;align-items:stretch}
 </style><env-titlebar></env-titlebar><env-menubar></env-menubar>
 <div class="tools"><env-toolbar id="a"></env-toolbar><env-toolbar id="b"></env-toolbar></div>
 <div class="main"><env-left-panel></env-left-panel><env-canvas><env-cursor></env-cursor></env-canvas><env-right-panel></env-right-panel></div>
 <env-status></env-status><env-taskbar></env-taskbar><env-ime></env-ime>`;
 this.shadowRoot.getElementById('a').items=row1;this.shadowRoot.getElementById('b').items=row2;}}
customElements.define('env-app',EnvApp);
</script>
</body></html>
